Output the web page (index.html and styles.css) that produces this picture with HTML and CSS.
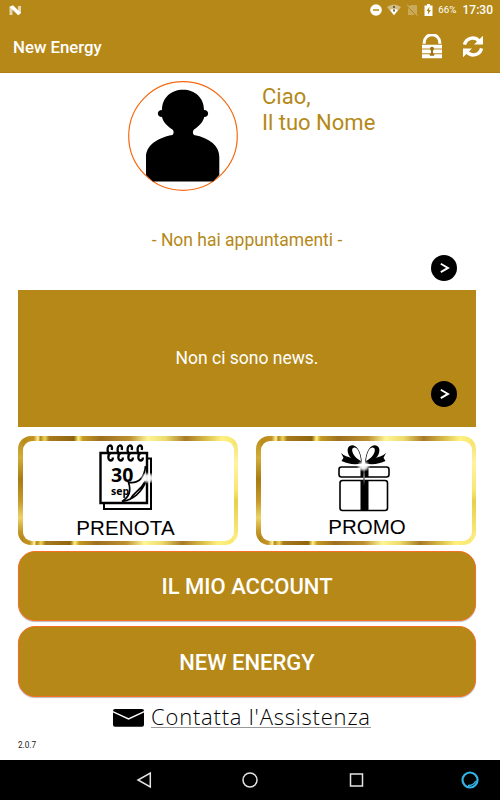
FILE: index.html
```html
<!DOCTYPE html>
<html lang="it">
<head>
<meta charset="utf-8">
<title>New Energy</title>
<link rel="stylesheet" href="styles.css">
</head>
<body>
<div class="screen">
  <header class="top">
    <div class="status">
      <svg class="n-logo" width="13" height="11" viewBox="0 0 13 11"><path d="M.5 2l3-1v9h-3z" fill="#e5d6ac"/><path d="M9 1h3v7l-3 2z" fill="#e5d6ac"/><path d="M.5 1.800L4 .3l8 7.700-2.800 2.200z" fill="#fff"/></svg>
      <div class="status-right">
        <svg class="dnd" width="12" height="12" viewBox="0 0 12 12"><circle cx="6" cy="6" r="5.800" fill="#fff"/><path d="M3 6h6" stroke="#b58817" stroke-width="1.500"/></svg>
        <svg class="wifi" width="14" height="12" viewBox="0 0 14 12"><path d="M0 3Q7-2 14 3L7 11.500z" fill="#d5bc80"/><path d="M3 6Q7 4 11 6L7 11z" fill="#fff"/><path d="M7 2v2M7 5.500v2" stroke="#66644d" stroke-width="2"/></svg>
        <svg class="sim" width="11" height="12" viewBox="0 0 11 12"><path d="M4 1h6v9L2 2.500zM1 3.500L8 11H1z" fill="#c9a95b"/><path d="M0 .5l10.500 11" stroke="#d6bd81"/></svg>
        <svg class="battery" width="9" height="12" viewBox="0 0 9 12"><path d="M.5 1.500H3V0h3v1.500h2.500V12h-8z" fill="#fff"/><path d="M5.500 2.500L2.500 7H4v3.500L7 6H5z" fill="#b58817"/></svg>
        <span class="percent">66%</span>
        <span class="clock">17:30</span>
      </div>
    </div>
    <div class="appbar">
      <h1>New Energy</h1>
      <svg class="lock" width="20" height="25" viewBox="0 0 20 25"><path d="M2.200 9.700V8.500a7.800 7.800 0 0 1 15.600 0v1.200" fill="none" stroke="#fff" stroke-width="3"/><path d="M0 10.800h20v3.800H0zM0 15.600h20v3.600H0zM0 20.200h20v4.100H0z" fill="#fff"/><circle cx="10" cy="14.800" r="2" fill="#9a7312"/><path d="M10 15v5M7.800 20.800h4.400" stroke="#9a7312" stroke-width="2"/></svg>
      <svg class="refresh" width="22" height="23" viewBox="0 0 22 23"><g fill="none" stroke="#fff" stroke-width="3.400"><path d="M2.500 9.700C4.200 2.700 12.500 1 17 6"/><path d="M19.500 13.300C17.800 20.300 9.500 22 5 17"/></g><path d="M21 .8v8.800h-9zM1 22.200v-8.800h9z" fill="#fff"/></svg>
    </div>
  </header>

  <main>
    <section class="profile">
      <svg class="avatar" width="110" height="110" viewBox="0 0 110 110"><circle cx="55" cy="55" r="54.300" fill="#fff" stroke="#f56a13" stroke-width="1.200"/><path d="M55 8.800c12 0 21 8 21 20.200 5.500 0 5.500 7 .2 7-1 5-5 9-10.200 12.500-1.500 1.500-1.500 4 0 5.500C82 57 91.300 65 91.300 76v18L85 100.500H25L18 94V76C18 65 28 57 44.500 54c1.500-1.500 1.500-4 0-5.500C39 45 35 41 34 36c-5.500 0-5.500-7 0-7C34 16.800 43 8.800 55 8.800z" fill="#000"/></svg>
      <p class="greeting">Ciao,<br>Il tuo Nome</p>
    </section>

    <section class="appointments">
      <p>- Non hai appuntamenti -</p>
      <svg class="go" width="26" height="26" viewBox="0 0 26 26"><circle cx="13" cy="13" r="13"/><path d="M9.800 8.700l7.200 4.200-7.200 4.200" fill="none" stroke="#fff" stroke-width="1.900"/></svg>
    </section>

    <section class="news">
      <p>Non ci sono news.</p>
      <svg class="go" width="26" height="26" viewBox="0 0 26 26"><circle cx="13" cy="13" r="13"/><path d="M9.800 8.700l7.200 4.200-7.200 4.200" fill="none" stroke="#fff" stroke-width="1.900"/></svg>
    </section>

    <div class="tiles">
      <div class="tile">
        <div class="tile-inner prenota">
          <svg width="62" height="68" viewBox="0 0 62 68">
            <defs><radialGradient id="spark"><stop offset="0" stop-color="#fff"/><stop offset=".45" stop-color="#fff" stop-opacity=".9"/><stop offset="1" stop-color="#fff" stop-opacity="0"/></radialGradient></defs>
            <path d="M49 15.500h5v50.500H7v-8" fill="#fff" stroke="#000" stroke-width="2"/>
            <path d="M3.500 10h46.500v50H3.500z" fill="#fff" stroke="#000" stroke-width="2.400"/>
            <g fill="none" stroke="#000" stroke-width="2.300"><path id="ring" d="M11.500 11C9.800 7 10.500 3 12.800 2.500c2.300-.2 2.500 2.500 1.900 4.500M14 10c-3.500 1-3.500 7.500-.3 7.500 1.500 0 2.200-1.500 2.200-3"/><use href="#ring" x="10"/><use href="#ring" x="20"/><use href="#ring" x="30"/></g>
            <text class="cal-day" x="14" y="38.700">30</text>
            <path d="M48 27c-2 7-8 14-15.500 12.500 2 8 0 14-5 18.500H48z" fill="#fff"/>
            <text class="cal-month" x="14" y="51.700">sep</text>
            <path d="M48.500 23c-1 11-6 18-17 16.500 3 8.500 0 15-6.500 19C36 57 45 49 49 38M33.500 56c4-8 10-8 15-18" fill="none" stroke="#000" stroke-width="1.700"/>
            <ellipse cx="51" cy="35" rx="8" ry="6" fill="url(#spark)"/>
          </svg>
          <span>PRENOTA</span>
        </div>
      </div>
      <div class="tile">
        <div class="tile-inner promo">
          <svg width="54" height="68" viewBox="0 0 54 68">
            <defs><linearGradient id="ribbon" x2="0" y2="1"><stop offset="0" stop-color="#111"/><stop offset=".35" stop-color="#888"/><stop offset=".7" stop-color="#000"/></linearGradient></defs>
            <g fill="none" stroke="#000" stroke-width="1.600"><rect x="2" y="23" width="50" height="10" rx="2.500"/><rect x="3" y="36.500" width="47.500" height="30" rx="2.500"/></g>
            <path d="M23.500 23h8v10h-8zM23.500 36h8v31h-8z"/><path d="M26.300 23h1.500v27h-1.500z" fill="url(#ribbon)"/>
            <path fill-rule="evenodd" d="M25 20C15 18 9 10 11 4 14-1.500 24 .5 25 20zm-1-3C23 5 18 1.500 15.500 4.500 14 8 18 14 24 17zM28 20C38 18 44 10 42 4 39-1.500 29 .5 28 20zm1-3C30 5 35 1.500 37.500 4.500 39 8 35 14 29 17z"/>
            <path d="M25 19.500C17 12.500 11 15 4 9l2.500 4.800L4.500 17c6 3 13 4 20.500 2.500zM28 19.500c8-7 14-4.500 21-10.500l-2.500 4.800 2 3.200c-6 3-13 4-20.500 2.500z"/>
            <ellipse cx="26.500" cy="22" rx="7" ry="6" fill="url(#spark)"/>
          </svg>
          <span>PROMO</span>
        </div>
      </div>
    </div>

    <a class="button">IL MIO ACCOUNT</a>
    <a class="button">NEW ENERGY</a>

    <div class="support">
      <svg width="31" height="18" viewBox="0 0 31 18"><rect width="31" height="17.700" rx="2"/><path d="M-.5 2.500l16 7.500 16-7.500" fill="none" stroke="#fff" stroke-width="1.500"/></svg>
      <a>Contatta l'Assistenza</a>
    </div>
    <p class="version">2.0.7</p>
  </main>

  <nav>
    <svg width="16" height="18" viewBox="0 0 16 18"><path d="M14.300 2v14L2 9z"/></svg>
    <svg width="18" height="18" viewBox="0 0 18 18"><circle cx="9" cy="9" r="7"/></svg>
    <svg width="16" height="18" viewBox="0 0 16 18"><path d="M2.500 3h12v12h-12z"/></svg>
    <svg class="alexa" width="20" height="20" viewBox="0 0 20 20"><circle cx="10" cy="10" r="7.500"/><path d="M8.700 17.500v-2c3.500-.3 5.800-2 7-4.500" stroke-width="1.400"/></svg>
  </nav>
</div>
</body>
</html>
```
FILE: styles.css
```css
* { box-sizing: border-box; }
body { margin: 0; font-family: Roboto, "Liberation Sans", sans-serif; background: #fff; }
p, h1 { margin: 0; }
svg { display: block; flex: none; }
.screen { width: 500px; height: 800px; display: flex; flex-direction: column; overflow: hidden; }

.top { height: 73px; background: #b58817; border-bottom: 1px solid #b07d0c; color: #fff; }
.status { height: 20px; display: flex; justify-content: space-between; padding: 0 7px 0 9px; }
.n-logo { margin-top: 5px; }
.status-right { display: flex; align-items: center; }
.wifi { margin-left: 5px; }
.sim { margin-left: 6px; }
.battery { margin-left: 6px; }
.percent { margin-left: 5px; font-size: 9.800px; line-height: 20px; }
.clock { margin-left: 6px; font-size: 12px; font-weight: 500; line-height: 20px; }
.appbar { height: 52px; display: flex; align-items: center; padding: 0 16px 0 13px; }
.appbar h1 { flex: 1; font-size: 16.800px; font-weight: 500; line-height: 24px; padding-top: 2px; }
.refresh { margin: 0 0 0 20px; }

main { height: 687px; padding: 0 24px 0 18px; }
.profile { height: 119px; display: flex; padding: 8px 0 0 110px; }
.greeting { margin-left: 24px; padding-top: 3px; font-size: 22px; line-height: 26px; color: #b58817; }
.appointments { height: 98px; display: flex; flex-direction: column; padding: 37px 0 0; }
.appointments p { text-align: center; font-size: 17.500px; line-height: 22px; color: #b58817; }
.appointments .go { margin: 4px 0 0 413px; }
.news { height: 137px; background: #b58817; color: #fff; padding-top: 57px; }
.news p { text-align: center; font-size: 17.500px; line-height: 22px; }
.news .go { margin: 12px 0 0 413px; }

.tiles { display: grid; grid-template-columns: 220px 220px; gap: 18px; margin-top: 9px; }
.tile {
  height: 109px; padding: 4.500px; border-radius: 13px;
  background:
    linear-gradient(180deg, #b58817 0, #d2ad3a 20%, #a87b14 40%, #c79a2a 60%, #ecd36a 75%, #c39625 88%, #a97b12 100%) 0 0 / 5px 100% no-repeat,
    linear-gradient(180deg, #f1df66 0, #fff3a0 25%, #f7e670 50%, #e8d04a 60%, #fff18a 100%) 100% 0 / 5px 100% no-repeat,
    linear-gradient(92deg, #b58817 0, #c39220 7%, #fff1a0 9%, #b58817 10%, #ead45c 12%, #a87a1c 14%, #8e650f 25%, #fff27e 27%, #c69924 29%, #9c7020 37%, #bd9130 50%, #fff596 58%, #eddb6b 66%, #a87a27 75%, #d9bd48 84%, #fff080 91%, #f4e467 100%);
}
.tile-inner { height: 100px; border-radius: 9px; background: #fff; display: flex; flex-direction: column; align-items: center; font-family: "Liberation Sans", sans-serif; font-size: 20.500px; line-height: 22px; color: #000; }
.prenota svg { margin: 2px 0 0 0; }
.prenota span { margin: 6px 5px 0 0; letter-spacing: .15px; }
.promo svg { margin: 3px 0 0 -5px; }
.promo span { margin: 4px 0 0 2px; }
.cal-day { font: bold 19.500px "Open Sans", sans-serif; }
.cal-month { font: bold 10.500px "Open Sans", sans-serif; }

.button { display: block; height: 70px; margin-top: 6px; border: 1.500px solid #f76f22; border-radius: 17px; background: #b58817; box-shadow: 0 1px 1px #bbb; color: #fff; font-size: 22px; font-weight: 500; line-height: 70px; text-align: center; }
.button + .button { margin-top: 5px; height: 71px; line-height: 71px; }
.support { display: flex; align-items: center; height: 28px; margin: 7px 0 0 95px; }
.support a { margin: -3px 0 0 7px; height: 22px; border-bottom: 1px solid #999; font-family: "Open Sans", sans-serif; font-size: 22px; font-weight: 300; letter-spacing: .8px; line-height: 20px; color: #000; white-space: nowrap; }
.version { margin-top: 8px; font-size: 8.200px; line-height: 10px; color: #222; }

nav { height: 40px; background: #000; display: grid; grid-template-columns: 16px 18px 16px 20px; column-gap: 89px; justify-content: start; align-items: center; padding-left: 136px; }
nav svg { fill: none; stroke: #e4e4e4; stroke-width: 1.500; }
nav .alexa { margin-left: 7px; stroke: #31b5e8; stroke-width: 2.200; }
```
